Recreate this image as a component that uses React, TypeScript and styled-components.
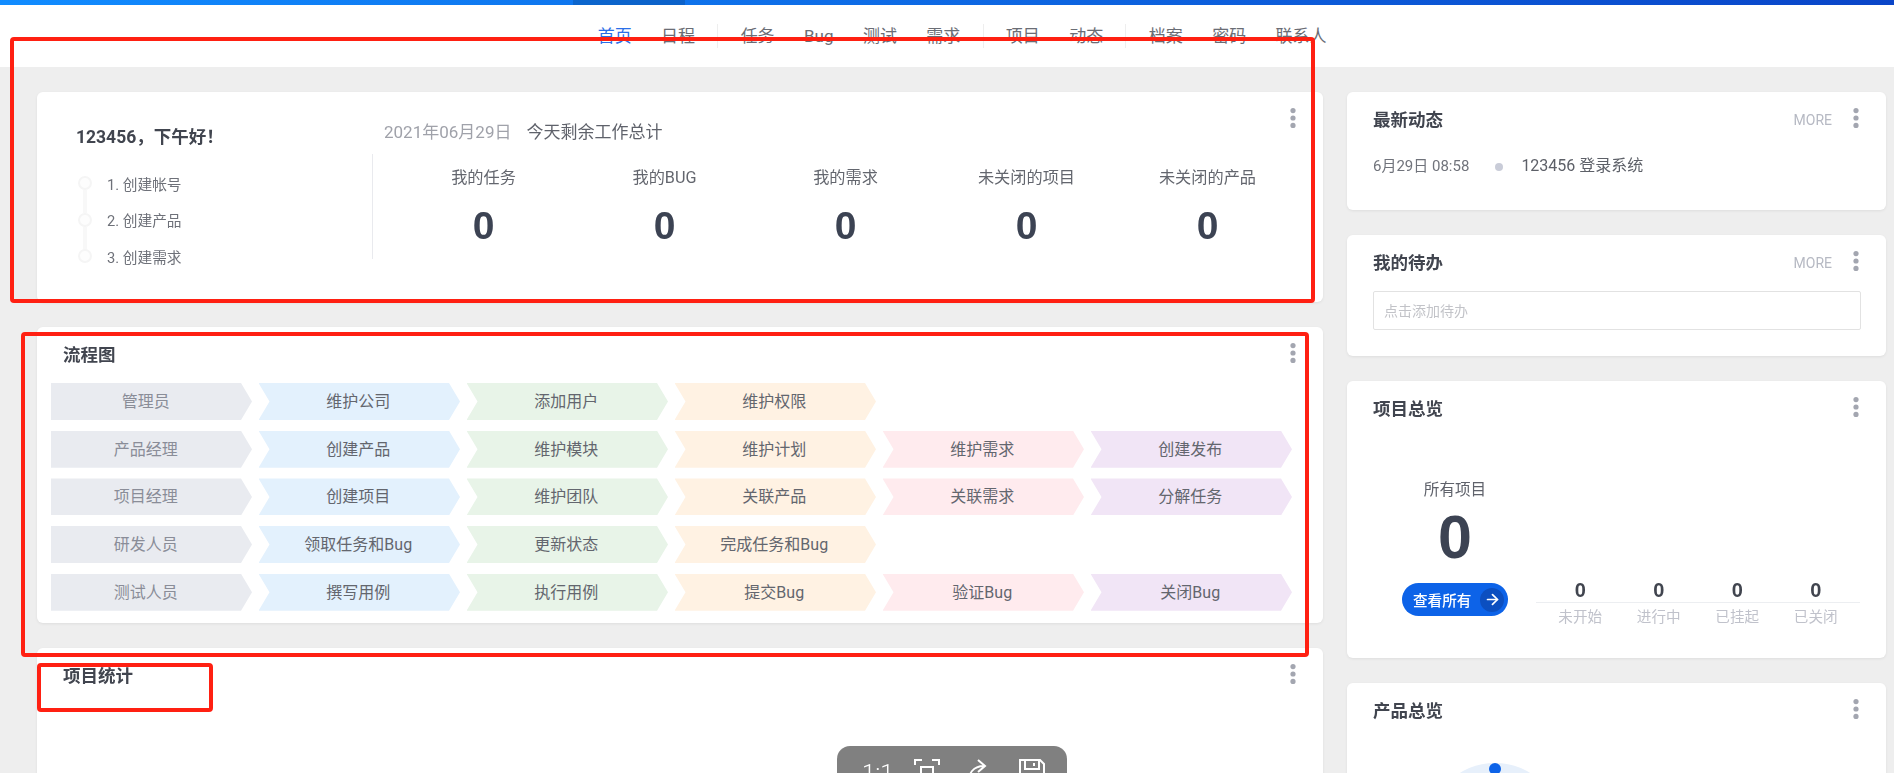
import React from "react";
import styled, { createGlobalStyle } from "styled-components";
import { ArrowRight } from "lucide-react";

const Global = createGlobalStyle`
  html, body { margin: 0; padding: 0; height: 773px; overflow: hidden; background: #eeeeee; }
  body { font-family: Roboto, "Noto Sans CJK SC", sans-serif; color: #555; }
  * { box-sizing: border-box; }
`;

const Page = styled.div`
  width: 1894px;
  height: 773px;
  overflow: hidden;
  filter: blur(0.6px);
`;

const TopBar = styled.div`
  height: 5px;
  background: linear-gradient(90deg, #118cff 0%, #0a45c8 100%);
  display: flex;
`;

const TopBarActive = styled.div`
  margin-left: 573px;
  width: 112px;
  background: rgba(0, 0, 0, 0.14);
`;

const Nav = styled.nav`
  height: 62px;
  background: #fff;
  display: flex;
  align-items: center;
  padding-left: 583px;
`;

const NavItem = styled.span<{ $active?: boolean }>`
  padding: 0 14.7px;
  font-size: 17px;
  line-height: 24px;
  color: ${(p) => (p.$active ? "#2b6fe8" : "#6a6d75")};
`;

const NavSep = styled.i`
  width: 1px;
  height: 24px;
  margin: 0 7.6px;
  background: #eeeeee;
`;

const Main = styled.main`
  display: grid;
  grid-template-columns: 1286px 539px;
  gap: 24px;
  padding: 25px 0 0 37px;
  align-items: start;
`;

const Column = styled.div`
  display: flex;
  flex-direction: column;
  gap: 25px;
`;

const Card = styled.section`
  position: relative;
  background: #fff;
  border-radius: 6px;
  box-shadow: 0 1px 3px rgba(0, 0, 0, 0.07);
`;

const KebabWrap = styled.svg`
  position: absolute;
  top: 16px;
  right: 27px;
  width: 6px;
  height: 20px;
  fill: #a3a6b0;
`;

const Kebab = () => (
  <KebabWrap viewBox="0 0 6 20">
    <circle cx="3" cy="2.6" r="2.6" />
    <circle cx="3" cy="10" r="2.6" />
    <circle cx="3" cy="17.4" r="2.6" />
  </KebabWrap>
);

const CardHeader = styled.header`
  display: flex;
  justify-content: space-between;
  align-items: center;
  padding: 16px 54px 0 26px;
  height: 40px;
`;

const CardTitle = styled.h2`
  margin: 0;
  font-size: 17.5px;
  line-height: 24px;
  font-weight: 700;
  color: #41454f;
`;

const More = styled.span`
  font-size: 14px;
  color: #b6b9c3;
`;

/* welcome */
const WelcomeCard = styled(Card)`
  height: 210px;
  display: grid;
  grid-template-columns: 335px 1fr;
`;

const LeftPanel = styled.div`
  padding: 33px 0 0 39px;
`;

const Greeting = styled.div`
  font-size: 17.5px;
  line-height: 24px;
  font-weight: 700;
  color: #41454f;
`;

const Steps = styled.ol`
  list-style: none;
  margin: 16px 0 0;
  padding: 0 0 0 2px;
`;

const Step = styled.li`
  height: 36.6px;
  display: flex;
  align-items: center;
  gap: 15px;
  font-size: 14.7px;
  color: #6e7179;
`;

const StepDot = styled.span<{ $last?: boolean }>`
  position: relative;
  width: 14px;
  height: 14px;
  border-radius: 50%;
  border: 2px solid #f5f5f5;
  background: #fdfdfd;
  &::after {
    content: "";
    display: ${(p) => (p.$last ? "none" : "block")};
    position: absolute;
    left: 3px;
    top: 12px;
    width: 4px;
    height: 23px;
    background: #f8f8f8;
  }
`;

const RightPanel = styled.div`
  padding-top: 28px;
`;

const DateLine = styled.div`
  padding-left: 12px;
  display: flex;
  gap: 15px;
  font-size: 17px;
  line-height: 24px;
  color: #5f626b;
`;

const DateText = styled.span`
  color: #a0a2aa;
`;

const StatsBox = styled.div`
  margin-top: 10px;
  height: 105px;
  border-left: 1px solid #e9eaee;
  padding: 12px 0 0 20px;
  display: grid;
  grid-template-columns: repeat(5, 181px);
`;

const Stat = styled.div`
  text-align: center;
`;

const StatLabel = styled.div`
  font-size: 16.2px;
  line-height: 24px;
  color: #63666e;
`;

const StatValue = styled.div`
  margin-top: 14px;
  font-family: "Liberation Sans", sans-serif;
  font-size: 39px;
  line-height: 44px;
  font-weight: 700;
  color: #3c4353;
`;

/* flow */
const FlowCard = styled(Card)`
  height: 296px;
`;

const FlowGrid = styled.div`
  margin: 16px 0 0 13.5px;
  display: grid;
  grid-template-columns: repeat(6, 201.5px);
  column-gap: 6.5px;
  row-gap: 10.7px;
`;

const tones: Record<string, { bg: string; fg: string }> = {
  gray: { bg: "#e9ebf0", fg: "#8a8d98" },
  blue: { bg: "#e3f1fd", fg: "#63666e" },
  green: { bg: "#e8f4e8", fg: "#63666e" },
  orange: { bg: "#fff2e3", fg: "#63666e" },
  pink: { bg: "#ffebee", fg: "#63666e" },
  purple: { bg: "#f1e5f6", fg: "#63666e" },
};

const Chevron = styled.div<{ $tone: string; $first?: boolean }>`
  height: 37px;
  display: flex;
  align-items: center;
  justify-content: center;
  font-size: 16px;
  padding-bottom: 3px;
  padding-right: ${(p) => (p.$first ? "11px" : "2px")};
  background: ${(p) => tones[p.$tone].bg};
  color: ${(p) => tones[p.$tone].fg};
  clip-path: ${(p) =>
    p.$first
      ? "polygon(0 0, calc(100% - 11px) 0, 100% 50%, calc(100% - 11px) 100%, 0 100%)"
      : "polygon(0 0, calc(100% - 11px) 0, 100% 50%, calc(100% - 11px) 100%, 0 100%, 11px 50%)"};
`;

const StatsCard = styled(Card)`
  height: 300px;
`;

/* right column */
const ActivityRow = styled.div`
  margin-top: 22px;
  padding: 0 26px 32px;
  display: flex;
  align-items: center;
  font-size: 15px;
  line-height: 24px;
  color: #70737b;
`;

const ActivityDot = styled.i`
  width: 8px;
  height: 8px;
  border-radius: 50%;
  background: #c9ccd8;
  margin: 1px 18px 0 26px;
`;

const ActivityText = styled.span`
  font-size: 16px;
  color: #5d6068;
`;

const TodoInput = styled.input`
  display: block;
  width: 488px;
  height: 39px;
  margin: 16px 0 26px 26px;
  padding: 0 10px;
  border: 1px solid #e2e2e2;
  border-radius: 2px;
  outline: none;
  font: 14px Roboto, "Noto Sans CJK SC", sans-serif;
  &::placeholder { color: #c2c3c8; }
`;

const Overview = styled.div`
  display: flex;
  gap: 28px;
  margin-top: 57px;
  padding: 0 0 29px 55px;
`;

const Total = styled.div`
  width: 106px;
  display: flex;
  flex-direction: column;
  align-items: center;
`;

const TotalLabel = styled.div`
  font-size: 15.6px;
  line-height: 24px;
  color: #5f626b;
`;

const TotalValue = styled.div`
  margin-top: 4px;
  font-family: "Liberation Sans", sans-serif;
  font-size: 61px;
  line-height: 62px;
  font-weight: 700;
  color: #3c4353;
`;

const ViewAll = styled.button`
  margin-top: 15px;
  width: 106px;
  height: 33px;
  border: 0;
  border-radius: 17px;
  background: #0d63e8;
  color: #fff;
  display: flex;
  align-items: center;
  justify-content: space-between;
  padding: 0 4px 0 11px;
  font: 500 14.6px Roboto, "Noto Sans CJK SC", sans-serif;
`;

const ViewAllIcon = styled.span`
  width: 24px;
  height: 24px;
  border-radius: 50%;
  background: #0c4fc0;
  display: flex;
  align-items: center;
  justify-content: center;
`;

const Mini = styled.div`
  width: 324px;
  margin-top: 100px;
  padding: 0 5px;
  display: grid;
  grid-template-columns: repeat(4, 78.5px);
  position: relative;
  &::after {
    content: "";
    position: absolute;
    left: 0;
    right: 0;
    top: 24px;
    height: 1px;
    background: #eceef1;
  }
`;

const MiniItem = styled.div`
  text-align: center;
`;

const MiniValue = styled.div`
  font-family: "Liberation Sans", sans-serif;
  font-size: 20px;
  line-height: 24px;
  font-weight: 700;
  color: #41454f;
`;

const MiniLabel = styled.div`
  margin-top: 3px;
  font-size: 14.6px;
  line-height: 24px;
  color: #c0c2cb;
`;

const ProductCard = styled(Card)`
  height: 300px;
`;

const Donut = styled.svg`
  display: block;
  margin: 40px 0 0 82px;
  width: 132px;
  height: 132px;
`;

/* overlays */
const Marker = styled.div<{ $x: number; $y: number; $w: number; $h: number }>`
  position: absolute;
  left: ${(p) => p.$x}px;
  top: ${(p) => p.$y}px;
  width: ${(p) => p.$w}px;
  height: ${(p) => p.$h}px;
  border: 4px solid #ff2012;
  border-radius: 4px;
  pointer-events: none;
`;

const ImageBar = styled.div`
  position: absolute;
  left: 837px;
  top: 746px;
  width: 230px;
  height: 60px;
  border-radius: 13px;
  background: #808080;
  color: #fff;
  display: flex;
  align-items: flex-start;
  padding: 12px 0 0 25px;
  filter: blur(0.4px);
`;

const RatioLabel = styled.span`
  font-size: 24px;
  line-height: 30px;
  font-weight: 300;
  width: 52px;
`;

const BarIcon = styled.svg<{ $gap: number }>`
  width: 26px;
  height: 26px;
  margin-left: ${(p) => p.$gap}px;
  margin-top: 1px;
  fill: none;
  stroke: #fff;
  stroke-width: 2;
`;

const navGroups = [
  [{ t: "首页", a: true }, { t: "日程" }],
  [{ t: "任务" }, { t: "Bug" }, { t: "测试" }, { t: "需求" }],
  [{ t: "项目" }, { t: "动态" }],
  [{ t: "档案" }, { t: "密码" }, { t: "联系人" }],
];

const stats = ["我的任务", "我的BUG", "我的需求", "未关闭的项目", "未关闭的产品"];
const toneOrder = ["gray", "blue", "green", "orange", "pink", "purple"];
const flows = [
  ["管理员", "维护公司", "添加用户", "维护权限"],
  ["产品经理", "创建产品", "维护模块", "维护计划", "维护需求", "创建发布"],
  ["项目经理", "创建项目", "维护团队", "关联产品", "关联需求", "分解任务"],
  ["研发人员", "领取任务和Bug", "更新状态", "完成任务和Bug"],
  ["测试人员", "撰写用例", "执行用例", "提交Bug", "验证Bug", "关闭Bug"],
];
const mini = ["未开始", "进行中", "已挂起", "已关闭"];

export default function App() {
  return (
    <>
      <Global />
      <Page>
        <TopBar>
          <TopBarActive />
        </TopBar>
        <Nav>
          {navGroups.map((g, i) => (
            <React.Fragment key={i}>
              {i > 0 && <NavSep />}
              {g.map((n) => (
                <NavItem key={n.t} $active={n.a}>
                  {n.t}
                </NavItem>
              ))}
            </React.Fragment>
          ))}
        </Nav>
        <Main>
          <Column>
            <WelcomeCard>
              <Kebab />
              <LeftPanel>
                <Greeting>123456，下午好！</Greeting>
                <Steps>
                  <Step><StepDot />1. 创建帐号</Step>
                  <Step><StepDot />2. 创建产品</Step>
                  <Step><StepDot $last />3. 创建需求</Step>
                </Steps>
              </LeftPanel>
              <RightPanel>
                <DateLine>
                  <DateText>2021年06月29日</DateText>
                  <span>今天剩余工作总计</span>
                </DateLine>
                <StatsBox>
                  {stats.map((s) => (
                    <Stat key={s}>
                      <StatLabel>{s}</StatLabel>
                      <StatValue>0</StatValue>
                    </Stat>
                  ))}
                </StatsBox>
              </RightPanel>
            </WelcomeCard>
            <FlowCard>
              <Kebab />
              <CardHeader>
                <CardTitle>流程图</CardTitle>
              </CardHeader>
              <FlowGrid>
                {flows.map((row, r) =>
                  toneOrder.map((tone, c) =>
                    row[c] ? (
                      <Chevron key={`${r}-${c}`} $tone={tone} $first={c === 0}>
                        {row[c]}
                      </Chevron>
                    ) : (
                      <span key={`${r}-${c}`} />
                    )
                  )
                )}
              </FlowGrid>
            </FlowCard>
            <StatsCard>
              <Kebab />
              <CardHeader>
                <CardTitle>项目统计</CardTitle>
              </CardHeader>
            </StatsCard>
          </Column>
          <Column>
            <Card>
              <Kebab />
              <CardHeader>
                <CardTitle>最新动态</CardTitle>
                <More>MORE</More>
              </CardHeader>
              <ActivityRow>
                6月29日 08:58
                <ActivityDot />
                <ActivityText>123456 登录系统</ActivityText>
              </ActivityRow>
            </Card>
            <Card>
              <Kebab />
              <CardHeader>
                <CardTitle>我的待办</CardTitle>
                <More>MORE</More>
              </CardHeader>
              <TodoInput placeholder="点击添加待办" readOnly />
            </Card>
            <Card>
              <Kebab />
              <CardHeader>
                <CardTitle>项目总览</CardTitle>
              </CardHeader>
              <Overview>
                <Total>
                  <TotalLabel>所有项目</TotalLabel>
                  <TotalValue>0</TotalValue>
                  <ViewAll>
                    查看所有
                    <ViewAllIcon>
                      <ArrowRight size={17} strokeWidth={2.4} />
                    </ViewAllIcon>
                  </ViewAll>
                </Total>
                <Mini>
                  {mini.map((m) => (
                    <MiniItem key={m}>
                      <MiniValue>0</MiniValue>
                      <MiniLabel>{m}</MiniLabel>
                    </MiniItem>
                  ))}
                </Mini>
              </Overview>
            </Card>
            <ProductCard>
              <Kebab />
              <CardHeader>
                <CardTitle>产品总览</CardTitle>
              </CardHeader>
              <Donut viewBox="0 0 132 132">
                <circle cx="66" cy="66" r="60" fill="none" stroke="#e7f0fb" strokeWidth="12" />
                <circle cx="66" cy="6" r="6" fill="#0d63e8" />
              </Donut>
            </ProductCard>
          </Column>
        </Main>
      </Page>
      <Marker $x={10} $y={37} $w={1305} $h={266} />
      <Marker $x={21} $y={332} $w={1288} $h={325} />
      <Marker $x={37} $y={663} $w={176} $h={49} />
      <ImageBar>
        <RatioLabel>1:1</RatioLabel>
        <BarIcon $gap={0} viewBox="0 0 26 26">
          <path d="M1 6V1h7M18 1h7v5M7 8h12v16H7z" />
        </BarIcon>
        <BarIcon $gap={24} viewBox="0 0 26 26">
          <path d="M4 26C4 15 9 7 20 7M14 1l7 6-7 6" />
        </BarIcon>
        <BarIcon $gap={29} viewBox="0 0 26 26">
          <path d="M1 1h20l4 4v20H1zM6 1v9h14V1M15 4v3" />
        </BarIcon>
      </ImageBar>
    </>
  );
}
